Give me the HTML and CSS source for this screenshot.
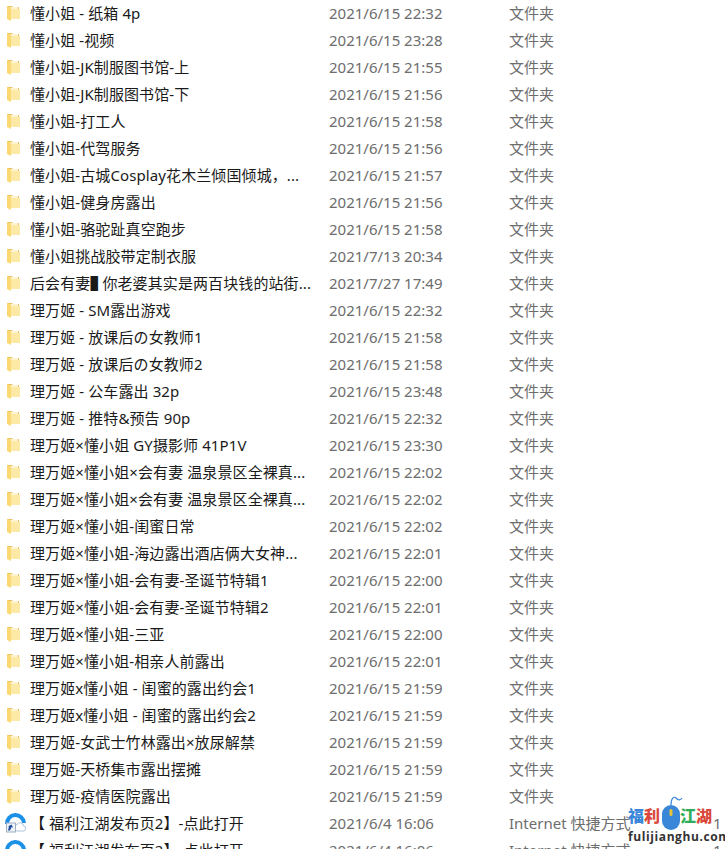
FILE: index.html
```html
<!DOCTYPE html>
<html lang="zh-CN">
<head>
    <meta charset="UTF-8">
    <title>文件列表</title>
    <link rel="stylesheet" href="styles.css">
</head>
<body>
    <svg class="defs" width="0" height="0">
        <symbol id="folder" viewBox="0 0 13 16">
            <path d="M0 1h5l1 1h6v11H0z" fill="#e8c063"/>
            <path d="M1 2h10v10H1z" fill="#fdf3cf"/>
            <path d="M4 4h9v10H4z" fill="#fde9a6"/>
            <path d="M0 1l4 1.500V16L0 14z" fill="#fbd872"/>
        </symbol>
        <symbol id="shortcut" viewBox="0 0 22 22">
            <path d="M3 12a8.500 8.500 0 0 1 17-1" fill="none" stroke="#1c8fe6" stroke-width="4"/>
            <path d="M13 19h6a2.500 2.500 0 0 0 .5-5 3.500 3.500 0 0 0-6.500-1.500A3.200 3.200 0 0 0 13 19z" fill="#fff" stroke="#a9c3dc"/>
            <rect x="2.500" y="11" width="9" height="9" fill="#eef3f8" stroke="#9fb0c2"/>
            <path d="M4 18.500l1-4h-1.200l3.700-2 1.500 3-1.500-.3-1.500 3.300z" fill="#1f4f9c"/>
        </symbol>
    </svg>

    <div class="file-list">
        <div class="file-row"><svg class="icon"><use href="#folder"/></svg><span class="name">懂小姐 - 纸箱 4p</span><span class="date">2021/6/15 22:32</span><span class="type">文件夹</span></div>
        <div class="file-row"><svg class="icon"><use href="#folder"/></svg><span class="name">懂小姐 -视频</span><span class="date">2021/6/15 23:28</span><span class="type">文件夹</span></div>
        <div class="file-row"><svg class="icon"><use href="#folder"/></svg><span class="name">懂小姐-JK制服图书馆-上</span><span class="date">2021/6/15 21:55</span><span class="type">文件夹</span></div>
        <div class="file-row"><svg class="icon"><use href="#folder"/></svg><span class="name">懂小姐-JK制服图书馆-下</span><span class="date">2021/6/15 21:56</span><span class="type">文件夹</span></div>
        <div class="file-row"><svg class="icon"><use href="#folder"/></svg><span class="name">懂小姐-打工人</span><span class="date">2021/6/15 21:58</span><span class="type">文件夹</span></div>
        <div class="file-row"><svg class="icon"><use href="#folder"/></svg><span class="name">懂小姐-代驾服务</span><span class="date">2021/6/15 21:56</span><span class="type">文件夹</span></div>
        <div class="file-row"><svg class="icon"><use href="#folder"/></svg><span class="name">懂小姐-古城Cosplay花木兰倾国倾城，...</span><span class="date">2021/6/15 21:57</span><span class="type">文件夹</span></div>
        <div class="file-row"><svg class="icon"><use href="#folder"/></svg><span class="name">懂小姐-健身房露出</span><span class="date">2021/6/15 21:56</span><span class="type">文件夹</span></div>
        <div class="file-row"><svg class="icon"><use href="#folder"/></svg><span class="name">懂小姐-骆驼趾真空跑步</span><span class="date">2021/6/15 21:58</span><span class="type">文件夹</span></div>
        <div class="file-row"><svg class="icon"><use href="#folder"/></svg><span class="name">懂小姐挑战胶带定制衣服</span><span class="date">2021/7/13 20:34</span><span class="type">文件夹</span></div>
        <div class="file-row"><svg class="icon"><use href="#folder"/></svg><span class="name">后会有妻<span class="block-char">▌</span> 你老婆其实是两百块钱的站街...</span><span class="date">2021/7/27 17:49</span><span class="type">文件夹</span></div>
        <div class="file-row"><svg class="icon"><use href="#folder"/></svg><span class="name">理万姬 - SM露出游戏</span><span class="date">2021/6/15 22:32</span><span class="type">文件夹</span></div>
        <div class="file-row"><svg class="icon"><use href="#folder"/></svg><span class="name">理万姬 - 放课后の女教师1</span><span class="date">2021/6/15 21:58</span><span class="type">文件夹</span></div>
        <div class="file-row"><svg class="icon"><use href="#folder"/></svg><span class="name">理万姬 - 放课后の女教师2</span><span class="date">2021/6/15 21:58</span><span class="type">文件夹</span></div>
        <div class="file-row"><svg class="icon"><use href="#folder"/></svg><span class="name">理万姬 - 公车露出 32p</span><span class="date">2021/6/15 23:48</span><span class="type">文件夹</span></div>
        <div class="file-row"><svg class="icon"><use href="#folder"/></svg><span class="name">理万姬 - 推特&amp;预告 90p</span><span class="date">2021/6/15 22:32</span><span class="type">文件夹</span></div>
        <div class="file-row"><svg class="icon"><use href="#folder"/></svg><span class="name">理万姬×懂小姐 GY摄影师 41P1V</span><span class="date">2021/6/15 23:30</span><span class="type">文件夹</span></div>
        <div class="file-row"><svg class="icon"><use href="#folder"/></svg><span class="name">理万姬×懂小姐×会有妻 温泉景区全裸真...</span><span class="date">2021/6/15 22:02</span><span class="type">文件夹</span></div>
        <div class="file-row"><svg class="icon"><use href="#folder"/></svg><span class="name">理万姬×懂小姐×会有妻 温泉景区全裸真...</span><span class="date">2021/6/15 22:02</span><span class="type">文件夹</span></div>
        <div class="file-row"><svg class="icon"><use href="#folder"/></svg><span class="name">理万姬×懂小姐-闺蜜日常</span><span class="date">2021/6/15 22:02</span><span class="type">文件夹</span></div>
        <div class="file-row"><svg class="icon"><use href="#folder"/></svg><span class="name">理万姬×懂小姐-海边露出酒店俩大女神...</span><span class="date">2021/6/15 22:01</span><span class="type">文件夹</span></div>
        <div class="file-row"><svg class="icon"><use href="#folder"/></svg><span class="name">理万姬×懂小姐-会有妻-圣诞节特辑1</span><span class="date">2021/6/15 22:00</span><span class="type">文件夹</span></div>
        <div class="file-row"><svg class="icon"><use href="#folder"/></svg><span class="name">理万姬×懂小姐-会有妻-圣诞节特辑2</span><span class="date">2021/6/15 22:01</span><span class="type">文件夹</span></div>
        <div class="file-row"><svg class="icon"><use href="#folder"/></svg><span class="name">理万姬×懂小姐-三亚</span><span class="date">2021/6/15 22:00</span><span class="type">文件夹</span></div>
        <div class="file-row"><svg class="icon"><use href="#folder"/></svg><span class="name">理万姬×懂小姐-相亲人前露出</span><span class="date">2021/6/15 22:01</span><span class="type">文件夹</span></div>
        <div class="file-row"><svg class="icon"><use href="#folder"/></svg><span class="name">理万姬x懂小姐 - 闺蜜的露出约会1</span><span class="date">2021/6/15 21:59</span><span class="type">文件夹</span></div>
        <div class="file-row"><svg class="icon"><use href="#folder"/></svg><span class="name">理万姬x懂小姐 - 闺蜜的露出约会2</span><span class="date">2021/6/15 21:59</span><span class="type">文件夹</span></div>
        <div class="file-row"><svg class="icon"><use href="#folder"/></svg><span class="name">理万姬-女武士竹林露出×放尿解禁</span><span class="date">2021/6/15 21:59</span><span class="type">文件夹</span></div>
        <div class="file-row"><svg class="icon"><use href="#folder"/></svg><span class="name">理万姬-天桥集市露出摆摊</span><span class="date">2021/6/15 21:59</span><span class="type">文件夹</span></div>
        <div class="file-row"><svg class="icon"><use href="#folder"/></svg><span class="name">理万姬-疫情医院露出</span><span class="date">2021/6/15 21:59</span><span class="type">文件夹</span></div>
        <div class="file-row"><svg class="icon-link"><use href="#shortcut"/></svg><span class="name">【 福利江湖发布页2】-点此打开</span><span class="date">2021/6/4 16:06</span><span class="type">Internet 快捷方式</span><span class="size">1 KB</span></div>
        <div class="file-row"><svg class="icon-link"><use href="#shortcut"/></svg><span class="name">【 福利江湖发布页2】-点此打开</span><span class="date">2021/6/4 16:06</span><span class="type">Internet 快捷方式</span><span class="size">1 KB</span></div>
    </div>

    <div class="watermark">
        <div class="wm-title">
            <span class="wm-blue">福</span><span class="wm-red">利</span>
            <svg class="wm-mouse" viewBox="0 0 22 34">
                <path d="M10 9C10 2 13 0 15 2s4 3 6 0" fill="none" stroke="#3a86d8" stroke-width="1.200"/>
                <rect x="1" y="9" width="18" height="25" rx="9" fill="#3a86d8"/>
                <rect x="8.500" y="13" width="3" height="7" rx="1.500" fill="#e8c33a"/>
            </svg>
            <span class="wm-green">江</span><span class="wm-red">湖</span>
        </div>
        <div class="wm-url">fulijianghu.com</div>
    </div>
</body>
</html>
```

FILE: styles.css
```css
* {
    box-sizing: border-box;
    margin: 0;
    padding: 0;
}

html, body {
    height: 849px;
    overflow: hidden;
}

body {
    position: relative;
    background-color: white;
    font-family: "Noto Sans", "Noto Sans CJK SC", sans-serif;
    font-size: 15px;
}

.defs {
    position: absolute;
}

.file-row {
    display: flex;
    align-items: center;
    height: 27px;
    padding-bottom: 2px;
    white-space: nowrap;
}

.icon {
    width: 13px;
    height: 16px;
    margin-left: 7px;
    margin-right: 10px;
    flex-shrink: 0;
}

.icon-link {
    width: 22px;
    height: 22px;
    margin-left: 4px;
    margin-right: 4px;
    flex-shrink: 0;
}

.name {
    width: 299px;
    flex-shrink: 0;
    color: #1a1a1a;
    letter-spacing: 0.1px;
}

.block-char {
    letter-spacing: -7px;
}

.date {
    width: 180px;
    flex-shrink: 0;
    color: #6d6d6d;
}

.type {
    width: 204px;
    flex-shrink: 0;
    color: #6d6d6d;
}

.size {
    flex-shrink: 0;
    color: #6d6d6d;
}

.watermark {
    position: absolute;
    left: 628px;
    top: 796px;
    width: 88px;
}

.wm-title {
    display: flex;
    align-items: flex-end;
    height: 34px;
    font-family: "Noto Sans CJK SC", sans-serif;
    font-size: 16px;
    font-weight: 900;
    line-height: 18px;
    text-shadow: 0 0 2px white;
}

.wm-title span {
    margin-bottom: 6px;
}

.wm-mouse {
    width: 22px;
    height: 34px;
    margin-left: 1px;
    margin-right: -3px;
}

.wm-blue {
    color: #3a86d8;
}

.wm-green {
    color: #2fae5a;
}

.wm-red {
    color: #d9483b;
}

.wm-url {
    font-family: "Open Sans", sans-serif;
    font-size: 12px;
    font-weight: 700;
    letter-spacing: 0.6px;
    color: #333;
    line-height: 13px;
    text-shadow: 0 0 2px white;
}
```
